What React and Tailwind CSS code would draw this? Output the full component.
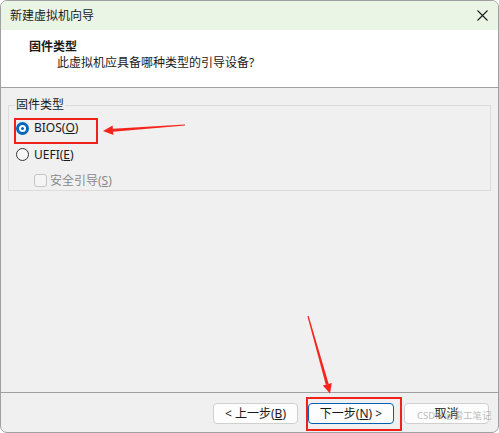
export default function App() {
  const font = { fontFamily: '"Segoe UI", "Noto Sans", "Noto Sans CJK SC", sans-serif' };

  return (
    <div
      className="relative w-[499px] h-[433px] flex flex-col overflow-hidden rounded-[7px] border border-[#a0a0a0] bg-[#f0f0f0] text-[12px] leading-[16px] text-[#1a1a1a]"
      style={font}
    >
      {/* title bar */}
      <div className="h-[29px] shrink-0 flex items-center justify-between pl-[9px] pr-[9px] bg-[#ebf5e5]">
        <span>新建虚拟机向导</span>
        <svg width="11" height="11" viewBox="0 0 11 11" className="mr-[1px]">
          <path d="M0.5 0.5 L10.5 10.5 M10.5 0.5 L0.5 10.5" stroke="#1a1a1a" strokeWidth="1.1" />
        </svg>
      </div>

      {/* header */}
      <div className="h-[58px] shrink-0 bg-white border-b border-[#a0a0a0] pl-[28px] pt-[9px]">
        <div className="font-bold">固件类型</div>
        <div className="pl-[28px]">此虚拟机应具备哪种类型的引导设备?</div>
      </div>

      {/* body */}
      <div className="flex-1 pt-[9px] px-[7px]">
        <fieldset className="border border-[#dcdcdc]">
          <legend className="ml-[6px] px-[1px]">固件类型</legend>
          <div className="mt-[2px] h-[26px] flex items-center pl-[7px] gap-[5px]">
            <span className="w-[13px] h-[13px] rounded-full bg-[#0067c0] flex items-center justify-center">
              <span className="w-[7px] h-[7px] rounded-full bg-white flex items-center justify-center">
                <span className="w-[3px] h-[3px] rounded-full bg-[#0067c0]" />
              </span>
            </span>
            <span>
              BIOS(<span className="underline">O</span>)
            </span>
          </div>
          <div className="h-[27px] flex items-center pl-[7px] gap-[5px]">
            <span className="w-[13px] h-[13px] rounded-full border border-[#333333] bg-[#f7f7f7]" />
            <span>
              UEFI(<span className="underline">E</span>)
            </span>
          </div>
          <div className="mt-[3px] h-[19px] flex items-center pl-[25px] gap-[3px] text-[#8a8a8a]">
            <span className="w-[13px] h-[13px] rounded-[3px] border border-[#c4c4c4] bg-[#f5f5f5]" />
            <span>
              安全引导(<span className="underline">S</span>)
            </span>
          </div>
        </fieldset>
      </div>

      {/* footer */}
      <div className="h-[40px] shrink-0 border-t border-[#a0a0a0] flex justify-end items-start gap-[10px] pt-[10px] pr-[9px]">
        <button className="w-[85px] h-[21px] rounded-[4px] border border-[#d0d0d0] bg-[#fdfdfd] flex items-center justify-center">
          &lt; 上一步(<span className="underline">B</span>)
        </button>
        <button className="w-[86px] h-[21px] rounded-[4px] border border-[#005fb8] bg-[#fdfdfd] flex items-center justify-center">
          下一步(<span className="underline">N</span>) &gt;
        </button>
        <button className="w-[85px] h-[21px] rounded-[4px] border border-[#d0d0d0] bg-[#fdfdfd] flex items-center justify-center">
          取消
        </button>
      </div>

      {/* annotations */}
      <div className="absolute left-[13px] top-[117px] w-[84px] h-[26px] border-2 border-[#f0201a]" />
      <div className="absolute left-[305px] top-[396px] w-[96px] h-[34px] border-2 border-[#f0201a]" />
      <svg className="absolute left-[-1px] top-[-1px] pointer-events-none" width="499" height="433">
        <polygon points="185.04,125.6 184.96,124.4 112.9,128.8 113.1,131.8" fill="#f6251c" />
        <polygon points="103,131 112.6,125.6 113.4,135" fill="#f6251c" />
        <polygon points="308.58,315.83 307.42,316.17 325.8,384.8 328.7,384.0" fill="#f6251c" />
        <polygon points="330,393.5 322.8,385.4 331.8,383" fill="#f6251c" />
      </svg>
      <div className="absolute left-[416px] top-[408px] whitespace-nowrap text-[9.5px] leading-[13px] text-[#a8a8a8] opacity-75">
        CSDN @雷工笔记
      </div>
    </div>
  );
}
